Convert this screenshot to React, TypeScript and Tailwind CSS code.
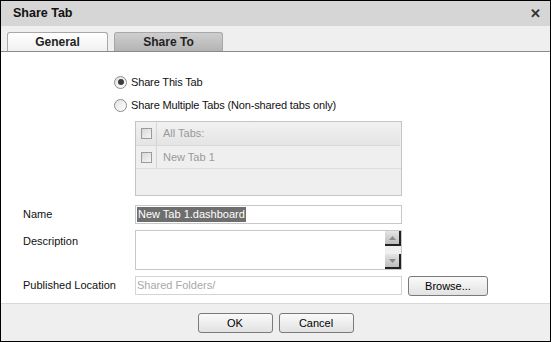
import React, { useState } from 'react';

const font = { fontFamily: '"Liberation Sans", Arial, sans-serif' };

const Radio: React.FC<{ checked: boolean; label: string; onClick: () => void }> = ({ checked, label, onClick }) => (
  <button type="button" onClick={onClick} className="flex items-center gap-[4px] h-[16px] text-[11px] tracking-[-0.15px] text-[#111]">
    <span className="w-[13px] h-[13px] rounded-full border border-[#8c8c8c] bg-gradient-to-br from-[#e2e2e2] to-[#ffffff] flex items-center justify-center">
      {checked && <span className="w-[6px] h-[6px] rounded-full bg-[#3c3c3c]" />}
    </span>
    <span>{label}</span>
  </button>
);

const Check: React.FC = () => (
  <span className="w-[11px] h-[11px] border border-[#9a9a9a] bg-gradient-to-br from-[#d8d8d8] to-[#f6f6f6] block" />
);

const Button: React.FC<{ label: string; className?: string }> = ({ label, className }) => (
  <button
    type="button"
    className={`h-[20px] rounded-[3px] border border-[#7a7a7a] bg-gradient-to-b from-[#fafafa] to-[#e2e2e2] text-[11px] text-black ${className ?? ''}`}
  >
    {label}
  </button>
);

export default function App() {
  const [mode, setMode] = useState<'one' | 'many'>('one');
  const [tab, setTab] = useState<'general' | 'share'>('general');

  const tabClass = (active: boolean) =>
    `h-[19px] rounded-t-[3px] border border-b-0 border-[#a8a8a8] text-[12px] font-bold text-[#222] ${
      active ? 'bg-gradient-to-b from-[#ffffff] to-[#f0f0f0]' : 'bg-gradient-to-b from-[#cfcfcf] to-[#b4b4b4]'
    }`;

  return (
    <div style={font} className="w-[551px] h-[342px] border border-black bg-white flex flex-col overflow-hidden">
      <div className="h-[25px] shrink-0 bg-[#d6d6d6] flex items-center justify-between pl-[12px] pr-[9px]">
        <span className="text-[12.5px] font-bold text-[#111]">Share Tab</span>
        <span className="text-[13px] font-bold text-[#333] leading-none">✕</span>
      </div>

      <div className="h-[26px] shrink-0 bg-[#efefef] border-b border-[#8a8a8a] flex items-end pl-[6px] gap-[6px]">
        <button type="button" onClick={() => setTab('general')} className={`w-[101px] ${tabClass(tab === 'general')}`}>
          General
        </button>
        <button type="button" onClick={() => setTab('share')} className={`w-[109px] ${tabClass(tab === 'share')}`}>
          Share To
        </button>
      </div>

      <div className="flex-1 flex flex-col pt-[22px]">
        <div className="pl-[113px] flex flex-col gap-[7px]">
          <Radio checked={mode === 'one'} label="Share This Tab" onClick={() => setMode('one')} />
          <Radio checked={mode === 'many'} label="Share Multiple Tabs (Non-shared tabs only)" onClick={() => setMode('many')} />
        </div>

        <div className="ml-[134px] mt-[8px] w-[267px] h-[75px] border border-[#c4c4c4] bg-[#efefef] flex flex-col">
          <div className="h-[24px] flex border-b border-[#d8d8d8] bg-gradient-to-b from-[#f2f2f2] to-[#e4e4e4] mr-[1px]">
            <div className="w-[21px] flex items-center justify-center border-r border-[#d6d6d6]"><Check /></div>
            <div className="pl-[6px] flex items-center text-[11px] text-[#9a9a9a]">All Tabs:</div>
          </div>
          <div className="h-[23px] flex border-b border-[#dcdcdc]">
            <div className="w-[21px] flex items-center justify-center border-r border-[#d6d6d6]"><Check /></div>
            <div className="pl-[6px] flex items-center text-[11px] text-[#9a9a9a]">New Tab 1</div>
          </div>
        </div>

        <div className="mt-[9px] grid grid-cols-[134px_267px_1fr] gap-y-[6px] text-[11px] text-[#111]">
          <div className="pl-[22px] h-[19px] flex items-center">Name</div>
          <div className="h-[19px] border border-[#c8c8c8] flex items-center px-[1px]">
            <span className="bg-[#6e6e6e] text-white leading-[15px] px-[1px]">New Tab 1.dashboard</span>
          </div>
          <div />

          <div className="pl-[22px] pt-[3px]">Description</div>
          <div className="h-[40px] border border-[#c8c8c8] flex justify-end">
            <div className="w-[16px] flex flex-col justify-between bg-[#efefef]">
              <div className="h-[15px] bg-gradient-to-b from-[#e4e4e4] to-[#bdbdbd] border-r-2 border-b-2 border-[#222] flex items-center justify-center">
                <svg width="7" height="4" viewBox="0 0 7 4"><path d="M0 4 L3.5 0 L7 4 Z" fill="#8a8a8a" /></svg>
              </div>
              <div className="h-[15px] bg-gradient-to-b from-[#e4e4e4] to-[#bdbdbd] border-r-2 border-b-2 border-[#222] flex items-center justify-center">
                <svg width="7" height="4" viewBox="0 0 7 4"><path d="M0 0 L3.5 4 L7 0 Z" fill="#8a8a8a" /></svg>
              </div>
            </div>
          </div>
          <div />

          <div className="pl-[22px] h-[19px] flex items-center">Published Location</div>
          <div className="h-[19px] border border-[#d4d4d4] flex items-center pl-[1px] text-[#a8a8a8]">Shared Folders/</div>
          <div className="pl-[6px]"><Button label="Browse..." className="w-[80px]" /></div>
        </div>
      </div>

      <div className="h-[38px] shrink-0 bg-[#efefef] border-t border-[#d8d8d8] flex justify-center items-center gap-[6px] pt-[1px]">
        <Button label="OK" className="w-[75px]" />
        <Button label="Cancel" className="w-[75px]" />
      </div>
    </div>
  );
}
